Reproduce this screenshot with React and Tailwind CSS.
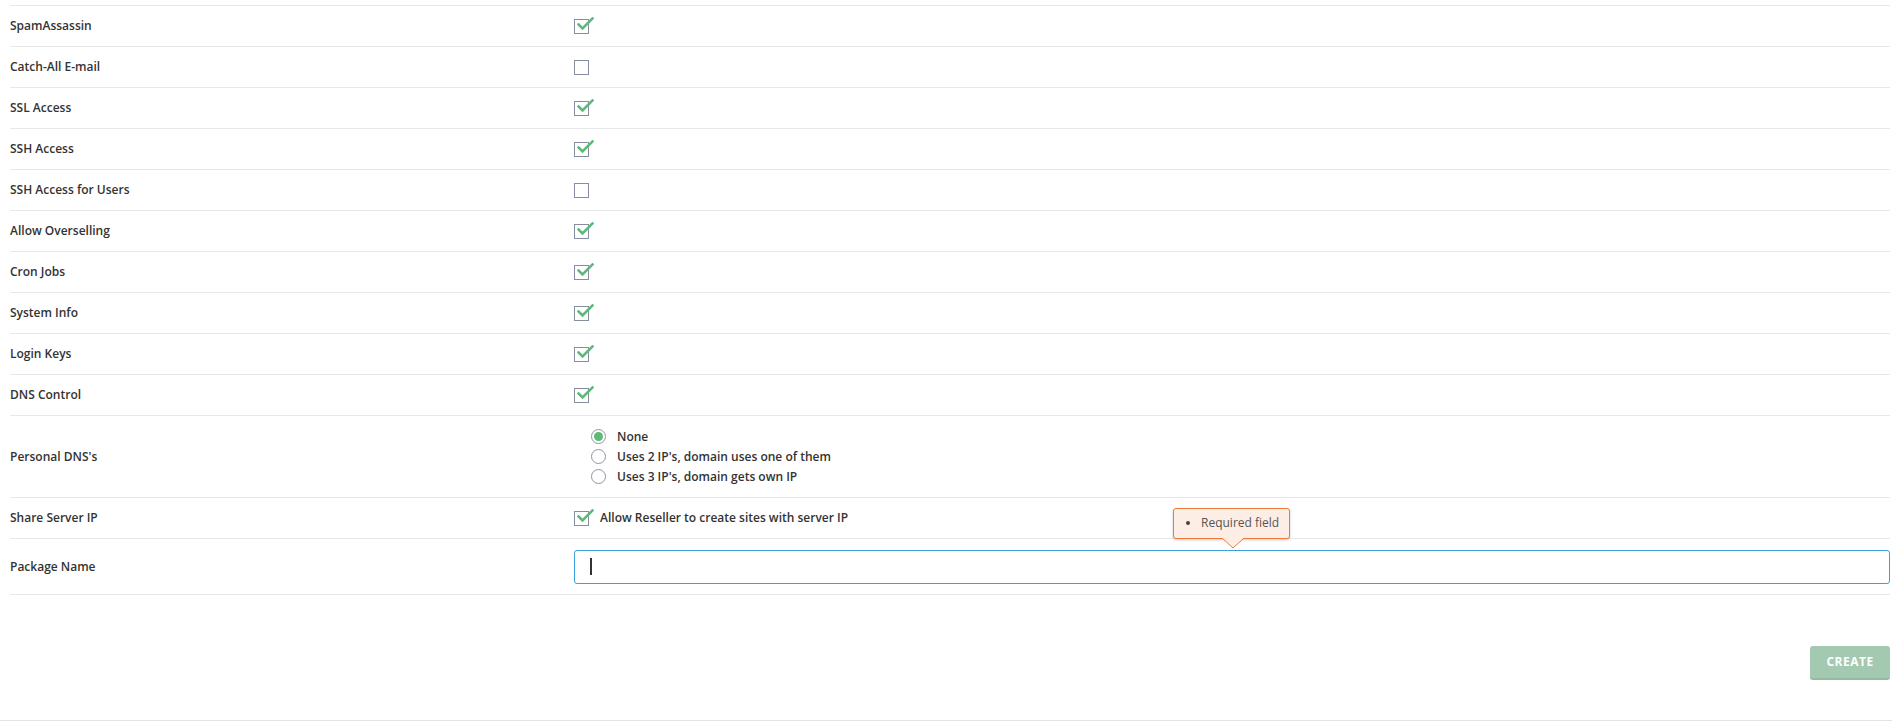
import React from 'react';

const rows = [
    { label: 'SpamAssassin', checked: true },
    { label: 'Catch-All E-mail', checked: false },
    { label: 'SSL Access', checked: true },
    { label: 'SSH Access', checked: true },
    { label: 'SSH Access for Users', checked: false },
    { label: 'Allow Overselling', checked: true },
    { label: 'Cron Jobs', checked: true },
    { label: 'System Info', checked: true },
    { label: 'Login Keys', checked: true },
    { label: 'DNS Control', checked: true },
];

const Checkbox = ({ checked }) => (
    <span className="relative inline-block w-[15px] h-[15px] border border-[#868da0] bg-white shrink-0">
        {checked && (
            <svg className="absolute left-[2px] top-[-3px]" width="17" height="14" viewBox="0 0 17 14">
                <path d="M1.5 7.5 L5.5 11.5 L15.5 1.5" fill="none" stroke="#5cb97a" strokeWidth="2.6" strokeLinecap="square" />
            </svg>
        )}
    </span>
);

const Radio = ({ checked }) => (
    <span className="inline-flex items-center justify-center w-[15px] h-[15px] rounded-full border border-[#8f94a3] bg-white shrink-0">
        {checked && <span className="w-[9px] h-[9px] rounded-full bg-[#5cb97a]"></span>}
    </span>
);

const Row = ({ label, children, className = 'h-[41px]' }) => (
    <div className={`flex items-center border-b border-[#e8e8e8] ${className}`}>
        <div className="w-[564px] shrink-0 text-[12px] font-semibold text-[#333]">{label}</div>
        <div className="flex-1">{children}</div>
    </div>
);

const App = () => {
    return (
        <div className="w-full h-[723px] bg-white overflow-hidden" style={{ fontFamily: '"Open Sans", "Liberation Sans", sans-serif' }}>
            <div className="pt-[5px] pl-[10px] pr-[2px]">
                <div className="border-t border-[#e8e8e8]">
                    {rows.map((row) => (
                        <Row key={row.label} label={row.label}>
                            <div className="flex items-center"><Checkbox checked={row.checked} /></div>
                        </Row>
                    ))}
                    <Row label="Personal DNS's" className="h-[82px]">
                        <div className="flex flex-col gap-[4px] pl-[17px] text-[12px] font-semibold text-[#333]">
                            <label className="flex items-center gap-[11px] h-[16px]"><Radio checked />None</label>
                            <label className="flex items-center gap-[11px] h-[16px]"><Radio />Uses 2 IP's, domain uses one of them</label>
                            <label className="flex items-center gap-[11px] h-[16px]"><Radio />Uses 3 IP's, domain gets own IP</label>
                        </div>
                    </Row>
                    <Row label="Share Server IP">
                        <label className="flex items-center gap-[11px] text-[12px] font-semibold text-[#333]">
                            <Checkbox checked />Allow Reseller to create sites with server IP
                        </label>
                    </Row>
                    <Row label="Package Name" className="h-[56px]">
                        <div className="relative">
                            <div className="h-[34px] border border-[#3aa0e0] rounded-[3px] bg-white flex items-center pl-[15px]">
                                <span className="w-[2px] h-[17px] bg-[#333]"></span>
                            </div>
                            <div className="absolute left-[599px] top-[-42px] w-[117px] h-[31px] bg-[#fdeee5] border border-[#ec7a38] rounded-[3px] shadow-[0_1px_3px_rgba(0,0,0,0.2)] flex items-center pl-[12px] text-[12px] text-[#555]">
                                <span className="w-[4px] h-[4px] rounded-full bg-[#444] mr-[11px]"></span>
                                Required field
                                <svg className="absolute left-[48px] top-[29px]" width="22" height="12" viewBox="0 0 22 12">
                                    <path d="M0 0 L11 10 L22 0" fill="#fdeee5" stroke="#ec7a38" strokeWidth="1" />
                                </svg>
                            </div>
                        </div>
                    </Row>
                </div>
                <div className="flex justify-end mt-[51px] mb-[40px]">
                    <button className="w-[80px] h-[34px] rounded-[3px] bg-[#a3c9b0] border-b-2 border-[#93bba0] text-white text-[12px] font-bold tracking-[0.5px]">
                        CREATE
                    </button>
                </div>
            </div>
            <div className="border-b border-[#e3e3e3]"></div>
        </div>
    );
};

export default App;
